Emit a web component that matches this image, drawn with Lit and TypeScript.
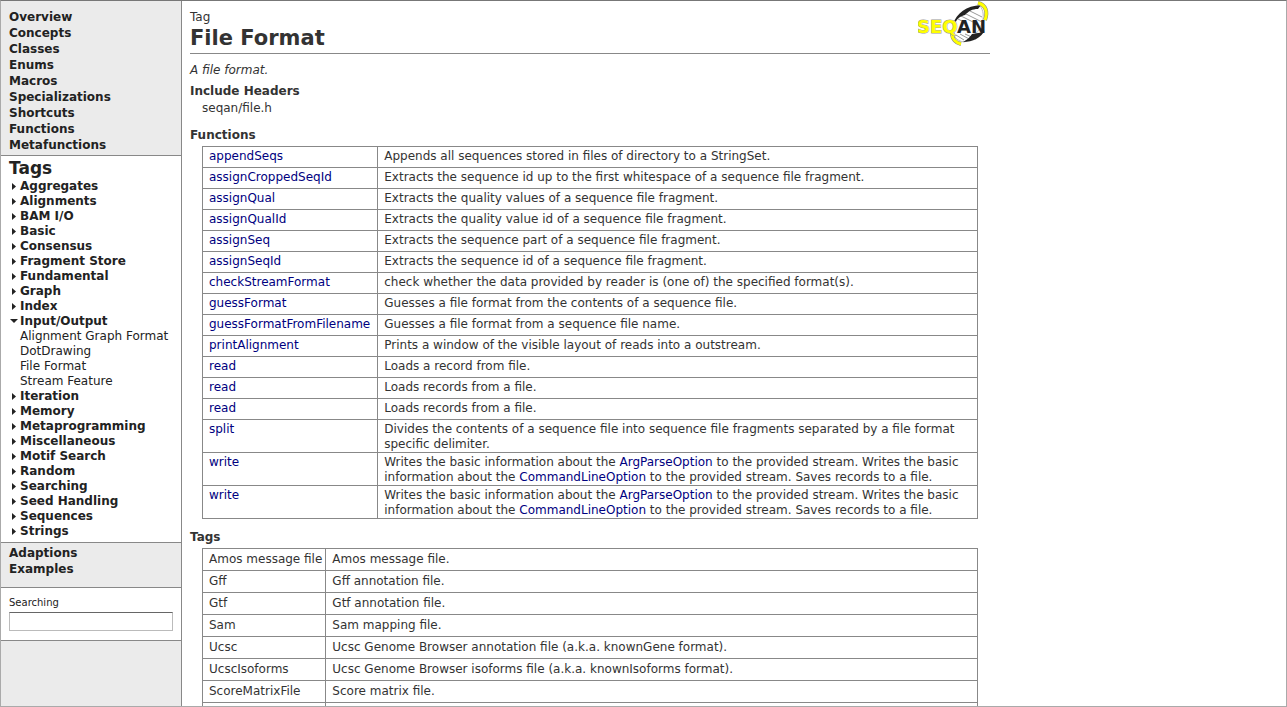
import { LitElement, html, css, svg } from "lit";
import { customElement, state } from "lit/decorators.js";

const TOP = ["Overview", "Concepts", "Classes", "Enums", "Macros", "Specializations", "Shortcuts", "Functions", "Metafunctions"];
const BOTTOM = ["Adaptions", "Examples"];

const TREE: { name: string; children?: string[] }[] = [
  { name: "Aggregates" }, { name: "Alignments" }, { name: "BAM I/O" }, { name: "Basic" },
  { name: "Consensus" }, { name: "Fragment Store" }, { name: "Fundamental" }, { name: "Graph" },
  { name: "Index" },
  { name: "Input/Output", children: ["Alignment Graph Format", "DotDrawing", "File Format", "Stream Feature"] },
  { name: "Iteration" }, { name: "Memory" }, { name: "Metaprogramming" }, { name: "Miscellaneous" },
  { name: "Motif Search" }, { name: "Random" }, { name: "Searching" }, { name: "Seed Handling" },
  { name: "Sequences" }, { name: "Strings" },
];

const link = (t: string) => html`<a class="ref" href="#">${t}</a>`;
const writeText = html`Writes the basic information about the ${link("ArgParseOption")} to the provided stream. Writes the basic information about the ${link("CommandLineOption")} to the provided stream. Saves records to a file.`;

const FUNCTIONS: [string, unknown][] = [
  ["appendSeqs", "Appends all sequences stored in files of directory to a StringSet."],
  ["assignCroppedSeqId", "Extracts the sequence id up to the first whitespace of a sequence file fragment."],
  ["assignQual", "Extracts the quality values of a sequence file fragment."],
  ["assignQualId", "Extracts the quality value id of a sequence file fragment."],
  ["assignSeq", "Extracts the sequence part of a sequence file fragment."],
  ["assignSeqId", "Extracts the sequence id of a sequence file fragment."],
  ["checkStreamFormat", "check whether the data provided by reader is (one of) the specified format(s)."],
  ["guessFormat", "Guesses a file format from the contents of a sequence file."],
  ["guessFormatFromFilename", "Guesses a file format from a sequence file name."],
  ["printAlignment", "Prints a window of the visible layout of reads into a outstream."],
  ["read", "Loads a record from file."],
  ["read", "Loads records from a file."],
  ["read", "Loads records from a file."],
  ["split", "Divides the contents of a sequence file into sequence file fragments separated by a file format specific delimiter."],
  ["write", writeText],
  ["write", writeText],
];

const TAGS: [string, string][] = [
  ["Amos message file", "Amos message file."],
  ["Gff", "Gff annotation file."],
  ["Gtf", "Gtf annotation file."],
  ["Sam", "Sam mapping file."],
  ["Ucsc", "Ucsc Genome Browser annotation file (a.k.a. knownGene format)."],
  ["UcscIsoforms", "Ucsc Genome Browser isoforms file (a.k.a. knownIsoforms format)."],
  ["ScoreMatrixFile", "Score matrix file."],
  ["", ""],
];

@customElement("seqan-logo")
class SeqanLogo extends LitElement {
  static styles = css`
    :host { display: block; }
    svg { display: block; }
    .word { font: bold 18px "DejaVu Sans", Verdana, sans-serif; }
  `;
  render() {
    return html`<svg width="72" height="46" viewBox="0 0 72 46" role="img" aria-label="SeqAn">
      <path d="M36 32C35 18 44 7 62 5C69 13 65 33 46 41C40 40 36 37 36 32Z" fill="#fff" stroke="#bbb"/>
      <path d="M50 9l14 7M46 12l18 9M43 15l12 6M40 18l8 4M47 33l11 5M42 33l11 6M38 34l8 5" stroke="#999"/>
      <path d="M35 23C39 12 48 5 63 4L60 8C54 8 51 10 47 14C42 15 39 18 36 23Z" fill="#222"/>
      <path d="M67 29C63 37 55 41 45 41C49 39 52 36 54 33L66 31Z" fill="#222"/>
      <path d="M60 2C68 4 70 11 67 19" fill="none" stroke="#888" stroke-width="4"/>
      <path d="M60 2C68 4 70 11 67 19" fill="none" stroke="#ff0" stroke-width="3"/>
      <path d="M34 32C34 38 38 42 43 43" fill="none" stroke="#888" stroke-width="4"/>
      <path d="M34 32C34 38 38 42 43 43" fill="none" stroke="#ff0" stroke-width="3"/>
      <text class="word" fill="#ff0" stroke="#999" stroke-width="1" paint-order="stroke" x="-1" y="32">SEQ</text>
      <text class="word" fill="#222" x="39" y="32">AN</text>
    </svg>`;
  }
}

@customElement("app-root")
class AppRoot extends LitElement {
  @state() private open = new Set(["Input/Output"]);

  static styles = css`
    :host { display: block; font: 12px/15px "DejaVu Sans", Verdana, sans-serif; color: #333; }
    * { box-sizing: border-box; }
    ul { list-style: none; margin: 0; padding: 0; }
    a { text-decoration: none; color: inherit; }
    .frame { display: flex; height: 100vh; overflow: hidden; background: #fff; border: 1px solid #aaa; border-top-color: #777; }
    .side { flex: none; width: 181px; background: #ebebeb; border-right: 1px solid #888; color: #222; }
    .links { padding: 8px 8px 2px; font-weight: bold; line-height: 16px; }
    .links.end { padding: 2px 8px 10px; }
    .tree { background: #fff; border: solid #888; border-width: 1px 0; padding: 1px 8px 3px; }
    .tree h2 { margin: 0; font-size: 17px; line-height: 22px; }
    .node { display: flex; align-items: center; gap: 3px; padding: 0 0 0 2px; border: 0; background: none; font: inherit; font-weight: bold; color: inherit; cursor: pointer; }
    .arrow { width: 6px; height: 7px; fill: #222; }
    .kids { padding-left: 11px; white-space: nowrap; }
    .search { background: #fff; border: solid #888; border-width: 1px 0; padding: 8px 8px 9px; }
    .search label { display: block; font-size: 10px; line-height: 14px; padding-bottom: 2px; }
    .search input { display: block; width: 100%; height: 19px; padding: 1px 3px; border: 1px solid #bbb; border-top-color: #666; background: #fff; font: inherit; outline: none; }
    .main { flex: 1; min-width: 0; padding: 9px 8px 0; }
    .doc { max-width: 800px; }
    .head { display: flex; justify-content: space-between; border-bottom: 1px solid #888; height: 44px; }
    .head h1 { margin: 0; font-size: 21px; line-height: 26px; }
    .logo { margin-top: -9px; }
    .lead { margin: 9px 0 6px; font-style: italic; }
    .doc h3 { margin: 0; font-size: 12px; line-height: 15px; }
    .include { margin: 2px 12px 12px; }
    .data { width: calc(100% - 24px); margin: 3px 12px 11px; border-collapse: collapse; }
    .data td { border: 1px solid #888; padding: 2px 6px 0; vertical-align: top; }
    .data td:first-child { width: 1px; white-space: nowrap; }
    .data.fn tr { height: 21px; }
    .data.fn td:first-child { padding-right: 7px; }
    .data.tags tr { height: 22px; }
    .data.tags td { padding-top: 3px; }
    .data.tags td:first-child { padding-right: 3px; }
    .ref { color: #000080; }
  `;

  private toggle(name: string) {
    const next = new Set(this.open);
    if (!next.delete(name)) next.add(name);
    this.open = next;
  }

  private node(n: { name: string; children?: string[] }) {
    const open = this.open.has(n.name);
    return html`<li>
      <button class="node" aria-expanded=${open ? "true" : "false"} @click=${() => this.toggle(n.name)}>
        <svg class="arrow" viewBox="0 0 6 7" overflow="visible">${open ? svg`<path d="M-1 1h8L3 5z"/>` : svg`<path d="M1 0v7l4-3.500z"/>`}</svg>${n.name}
      </button>
      ${open && n.children ? html`<ul class="kids">${n.children.map((c) => html`<li><a href="#">${c}</a></li>`)}</ul>` : ""}
    </li>`;
  }

  private list(items: string[]) {
    return html`<ul>${items.map((t) => html`<li><a href="#">${t}</a></li>`)}</ul>`;
  }

  render() {
    return html`<div class="frame">
      <nav class="side">
        <div class="links">${this.list(TOP)}</div>
        <div class="tree"><h2>Tags</h2><ul>${TREE.map((n) => this.node(n))}</ul></div>
        <div class="links end">${this.list(BOTTOM)}</div>
        <div class="search"><label for="q">Searching</label><input id="q" type="text"></div>
      </nav>
      <main class="main"><div class="doc">
        <header class="head">
          <div><div>Tag</div><h1>File Format</h1></div>
          <seqan-logo class="logo"></seqan-logo>
        </header>
        <p class="lead">A file format.</p>
        <h3>Include Headers</h3>
        <div class="include">seqan/file.h</div>
        <h3>Functions</h3>
        <table class="data fn">${FUNCTIONS.map(([n, d]) => html`<tr><td>${link(n)}</td><td>${d}</td></tr>`)}</table>
        <h3>Tags</h3>
        <table class="data tags">${TAGS.map(([n, d]) => html`<tr><td>${n}</td><td>${d}</td></tr>`)}</table>
      </div></main>
    </div>`;
  }
}
